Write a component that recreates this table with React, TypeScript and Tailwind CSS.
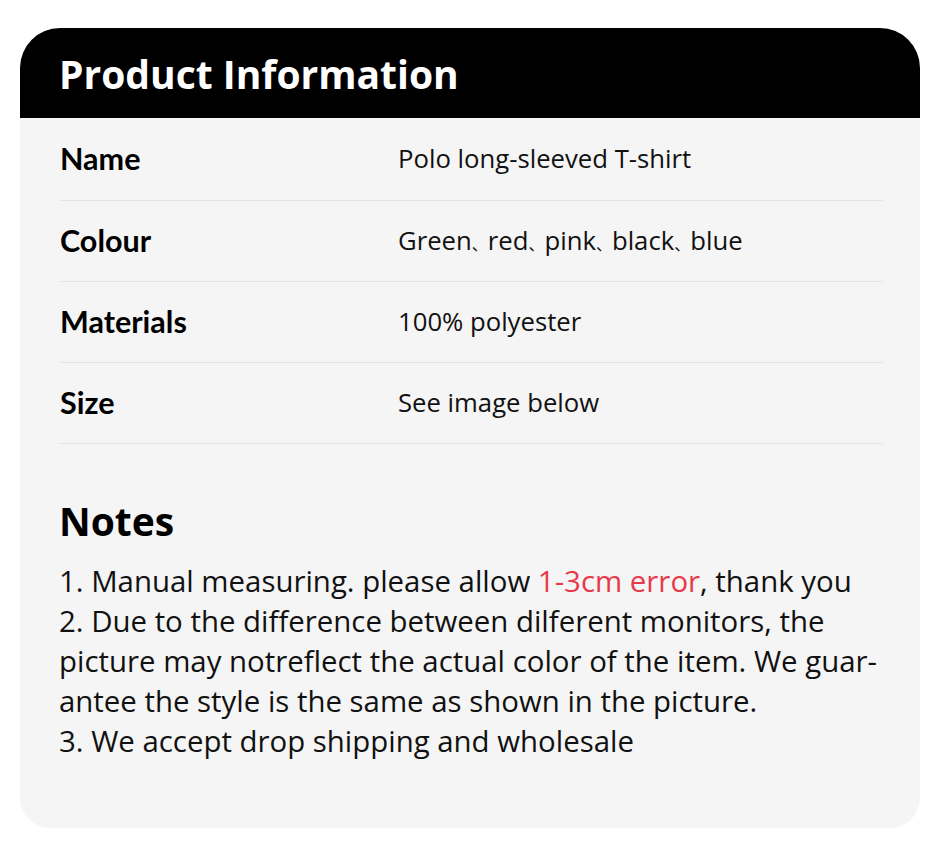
const ROWS = [
  { label: 'Name', value: ['Polo long-sleeved T-shirt'] },
  { label: 'Colour', value: ['Green', 'red', 'pink', 'black', 'blue'] },
  { label: 'Materials', value: ['100% polyester'] },
  { label: 'Size', value: ['See image below'] },
];

export default function App() {
  return (
    <div className="w-[940px] h-[845px] bg-white pt-[28px] px-[20px] font-['Open_Sans',sans-serif]">
      <div className="w-[900px] h-[800px] bg-[#f5f5f5] rounded-t-[40px] rounded-b-[30px] overflow-hidden">
        <div className="h-[90px] bg-black flex items-center pl-[39px]">
          <h1 className="text-white font-bold text-[39px] leading-none">Product Information</h1>
        </div>

        <div className="px-[40px] pr-[37px]">
          {ROWS.map((row) => (
            <div
              key={row.label}
              className="h-[81px] flex items-center border-b border-[#e3e3e3] first:h-[83px]"
            >
              <span className="w-[338px] font-['Lato',sans-serif] font-bold text-[30.5px] text-black">
                {row.label}
              </span>
              <span className="text-[25.7px] text-[#111] whitespace-nowrap">
                {row.value.map((part, i) => (
                  <span key={part}>
                    {i > 0 && (
                      <span className="text-[16px] font-['Noto_Sans_CJK_SC',sans-serif]">、</span>
                    )}
                    {part}
                  </span>
                ))}
              </span>
            </div>
          ))}
        </div>

        <div className="px-[39px] pt-[57px]">
          <h2 className="font-bold text-[39px] leading-none text-black">Notes</h2>
          <div className="mt-[21px] text-[29.4px] leading-[40px] text-[#111] whitespace-nowrap">
            <p>
              1. Manual measuring. please allow <span className="text-[#e8394a]">1-3cm error</span>, thank you
            </p>
            <p>2. Due to the difference between dilferent monitors, the</p>
            <p>picture may notreflect the actual color of the item. We guar-</p>
            <p>antee the style is the same as shown in the picture.</p>
            <p>3. We accept drop shipping and wholesale</p>
          </div>
        </div>
      </div>
    </div>
  );
}
